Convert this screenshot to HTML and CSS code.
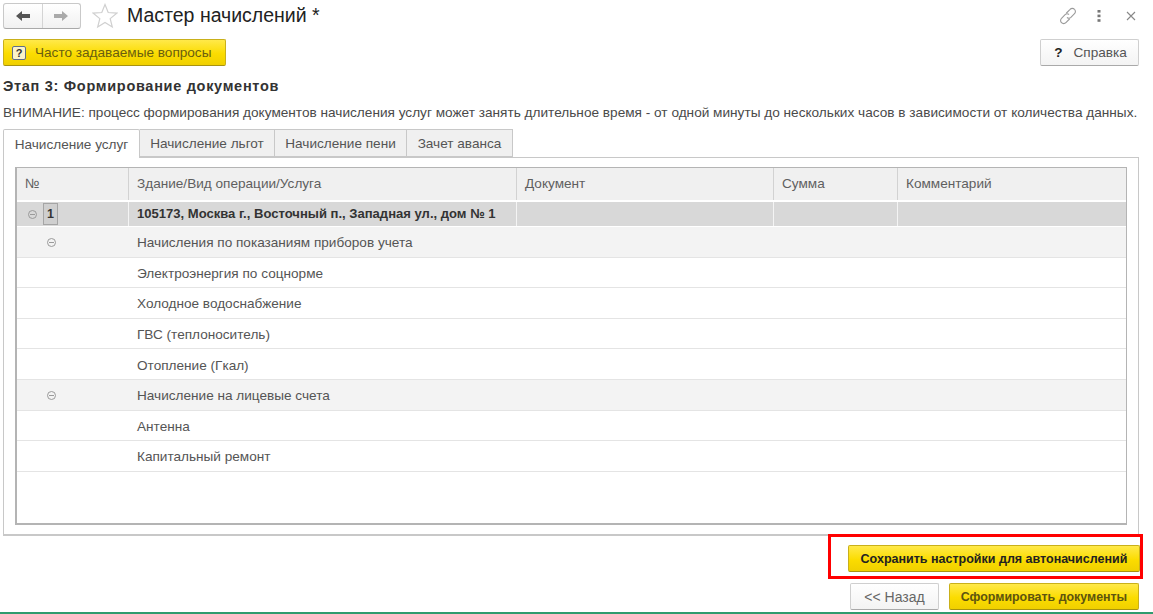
FILE: index.html
```html
<!DOCTYPE html>
<html lang="ru">
<head>
<meta charset="utf-8">
<title>Мастер начислений</title>
<link rel="stylesheet" href="styles.css">
</head>
<body>
<div class="page">
  <header class="topbar">
    <div class="nav">
      <span class="nav-btn">
        <svg width="16" height="12" viewBox="0 0 16 12"><path d="M1 6l6-5v3h8v4H7v3z" fill="#555"/></svg>
      </span>
      <span class="nav-btn">
        <svg width="16" height="12" viewBox="0 0 16 12"><path d="M15 6L9 1v3H1v4h8v3z" fill="#aaa"/></svg>
      </span>
    </div>
    <svg class="star" width="26" height="26" viewBox="0 0 26 26"><path d="M13 1.5l3.2 8 8.6.6-6.6 5.5 2.1 8.4L13 19.4l-7.3 4.6 2.1-8.4-6.6-5.5 8.6-.6z" fill="#fff" stroke="#d0d0d0" stroke-width="1.2"/></svg>
    <h1 class="title">Мастер начислений *</h1>
    <div class="win-icons">
      <svg width="20" height="20" viewBox="0 0 20 20"><g fill="none" stroke="#9a9a9a" stroke-width="1.1" stroke-linecap="round"><path d="M8.5 7l3.6-3.7a3 3 0 0 1 4.4 0 3 3 0 0 1 0 4.3l-3.6 3.7a3 3 0 0 1-3.6.4"/><path d="M11.5 13l-3.6 3.7a3 3 0 0 1-4.4 0 3 3 0 0 1 0-4.3l3.6-3.7a3 3 0 0 1 3.6-.4"/></g></svg>
      <svg width="4" height="12" viewBox="0 0 4 12"><g fill="#777"><rect x="0.5" y="0" width="3" height="2.6"/><rect x="0.5" y="4.6" width="3" height="2.6"/><rect x="0.5" y="9.2" width="3" height="2.6"/></g></svg>
      <svg width="10" height="10" viewBox="0 0 10 10"><path d="M1 1l8 8M9 1l-8 8" stroke="#888" stroke-width="1.1"/></svg>
    </div>
  </header>

  <div class="actions">
    <button class="btn btn-yellow btn-faq">
      <span class="q-icon">?</span>Часто задаваемые вопросы
    </button>
    <button class="btn btn-help"><span class="help-mark">?</span>Справка</button>
  </div>

  <h2 class="stage">Этап 3: Формирование документов</h2>
  <p class="notice">ВНИМАНИЕ: процесс формирования документов начисления услуг может занять длительное время - от одной минуты до нескольких часов в зависимости от количества данных.</p>

  <nav class="tabs">
    <span class="tab tab-active tab-1">Начисление услуг</span>
    <span class="tab tab-2">Начисление льгот</span>
    <span class="tab tab-3">Начисление пени</span>
    <span class="tab tab-4">Зачет аванса</span>
  </nav>

  <section class="panel">
    <div class="table">
      <div class="row row-head">
        <div class="cell">№</div>
        <div class="cell">Здание/Вид операции/Услуга</div>
        <div class="cell">Документ</div>
        <div class="cell">Сумма</div>
        <div class="cell">Комментарий</div>
      </div>
      <div class="row row-building">
        <div class="cell cell-num"><span class="minus"></span><span class="num-box">1</span></div>
        <div class="cell">105173, Москва г., Восточный п., Западная ул., дом № 1</div>
        <div class="cell"></div>
        <div class="cell"></div>
        <div class="cell"></div>
      </div>
      <div class="line line-group"><div class="line-num"><span class="minus minus-sub"></span></div><div>Начисления по показаниям приборов учета</div></div>
      <div class="line"><div class="line-num"></div><div>Электроэнергия по соцнорме</div></div>
      <div class="line"><div class="line-num"></div><div>Холодное водоснабжение</div></div>
      <div class="line"><div class="line-num"></div><div>ГВС (теплоноситель)</div></div>
      <div class="line"><div class="line-num"></div><div>Отопление (Гкал)</div></div>
      <div class="line line-group"><div class="line-num"><span class="minus minus-sub"></span></div><div>Начисление на лицевые счета</div></div>
      <div class="line"><div class="line-num"></div><div>Антенна</div></div>
      <div class="line"><div class="line-num"></div><div>Капитальный ремонт</div></div>
    </div>
  </section>

  <div class="save-wrap">
    <div class="highlight">
      <button class="btn btn-yellow btn-save">Сохранить настройки для автоначислений</button>
    </div>
  </div>

  <div class="footer">
    <button class="btn btn-back">&lt;&lt; Назад</button>
    <button class="btn btn-yellow btn-make">Сформировать документы</button>
  </div>
  <div class="strip"></div>
</div>
</body>
</html>
```
FILE: styles.css
```css
* { box-sizing: border-box; }
html, body { margin: 0; padding: 0; }
body {
  width: 1153px;
  height: 614px;
  overflow: hidden;
  background: #fff;
  font-family: "Liberation Sans", Arial, sans-serif;
  font-size: 13.6px;
  color: #555;
}
.page { display: flex; flex-direction: column; height: 614px; }

.topbar { display: flex; align-items: center; height: 29px; padding: 2px 17px 0 3px; flex: none; }
.nav {
  display: flex; width: 78px; height: 26px;
  border: 1px solid #c9c9c9; border-bottom-color: #a9a9a9; border-radius: 3px;
  background: linear-gradient(#fff, #f1f1f1);
}
.nav-btn { flex: 1; display: flex; align-items: center; justify-content: center; }
.nav-btn + .nav-btn { border-left: 1px solid #d4d4d4; }
.star { margin-left: 11px; }
.title { margin: 0 0 0 9px; font-size: 19.5px; font-weight: 400; color: #222; }
.win-icons { margin-left: auto; display: flex; align-items: center; gap: 19px; }
.win-icons svg:nth-child(2) { margin-right: 6px; }

.actions { display: flex; justify-content: space-between; padding: 10px 14px 0 3px; flex: none; }
.btn {
  font-family: inherit; font-size: 13.6px; color: #555; padding: 0; margin: 0;
  display: flex; align-items: center; justify-content: center;
  border-radius: 2px; white-space: nowrap;
}
.btn-yellow {
  background: linear-gradient(#ffe94a, #fbdc00 55%, #f0d000);
  border: 1px solid #c9b01a; border-bottom-color: #a8930f;
}
.btn-faq { width: 223px; height: 27px; justify-content: flex-start; padding-left: 8px; color: #6a5e10; }
.q-icon {
  width: 14px; height: 14px; border: 1px solid #5f6f8a; border-radius: 2px; background: #fbf3c8;
  color: #333; font-size: 11px; line-height: 12px; text-align: center; margin-right: 9px; font-weight: 700;
}
.btn-help {
  width: 99px; height: 27px; background: linear-gradient(#fff, #f3f3f3);
  border: 1px solid #cfcfcf; border-bottom-color: #a9a9a9; padding-left: 2px;
}
.help-mark { font-weight: 700; color: #222; font-size: 13.6px; margin-right: 11px; }

.stage { margin: 12px 0 0 3px; font-size: 14.5px; line-height: 16px; font-weight: 700; color: #333; letter-spacing: 0.7px; flex: none; }
.notice { margin: 11px 0 0 3px; font-size: 13.63px; line-height: 16px; white-space: nowrap; color: #4a4a4a; flex: none; }

.tabs { display: flex; padding-left: 3px; margin-top: 8px; height: 29px; flex: none; position: relative; z-index: 1; }
.tab {
  display: flex; align-items: center; justify-content: center; height: 28px;
  background: #f0f0f0; border: 1px solid #c8c8c8; border-left: 0; color: #555;
}
.tab-active { background: #fff; border-left: 1px solid #c8c8c8; border-bottom: 0; height: 29px; border-radius: 2px 2px 0 0; }
.tab-1 { width: 137px; }
.tab-2 { width: 135px; }
.tab-3 { width: 132px; }
.tab-4 { width: 106px; }

.panel {
  margin: -1px 14px -2px 3px; height: 379px; padding: 9px 11px 10px 11px;
  border: 1px solid #c8c8c8; border-bottom-width: 2px; flex: none;
}
.table { height: 358px; border: 1px solid #b4b4b4; border-width: 1px 1px 2px 2px; }
.row { display: grid; grid-template-columns: 112px 388px 257px 124px 1fr; }
.row-head { height: 34px; background: #f0f0f0; border-bottom: 2px solid #fff; color: #5f5f5f; }
.row-head .cell { padding-left: 8px; line-height: 31px; border-right: 1px solid #d2d2d2; }
.row-head .cell:last-child, .row-building .cell:last-child { border-right: 0; }
.row-building { height: 25px; background: #d8d8d8; border-bottom: 1px solid #fff; font-weight: 700; font-size: 13.05px; color: #333; }
.row-building .cell { padding-left: 8px; line-height: 23px; border-right: 1px solid #f4f4f4; }
.row-building .cell-num { display: flex; align-items: center; padding-left: 11px; }
.minus {
  display: block; width: 9px; height: 9px; border: 1px solid #9a9a9a; border-radius: 50%;
  background: linear-gradient(#9a9a9a, #9a9a9a) center / 5px 1px no-repeat;
}
.minus-sub { margin-left: 30px; }
.num-box {
  width: 15px; height: 22px; margin-left: 6px; background: #cfcfcf; border: 1px solid #a5a5a5;
  text-align: center; line-height: 20px; font-size: 12.5px;
}
.line {
  display: grid; grid-template-columns: 120px 1fr; align-items: center; height: 30.6px;
  border-bottom: 1px solid #e4e4e4; padding-top: 2px;
}
.line-group { background: #f3f3f3; }
.line-num { display: flex; align-items: center; }

.save-wrap { display: flex; justify-content: flex-end; padding-right: 10px; flex: none; }
.highlight { border: 3px solid #f00; width: 315px; height: 45px; padding: 8px 1px 0 17px; }
.btn-save { width: 292px; height: 27px; font-weight: 700; font-size: 12.5px; color: #222; }
.footer { display: flex; justify-content: flex-end; gap: 10px; padding: 4px 14px 0 0; flex: none; }
.btn-back {
  width: 89px; height: 27px; background: linear-gradient(#fff, #f3f3f3);
  border: 1px solid #cfcfcf; border-bottom-color: #a9a9a9; color: #666; font-size: 14px;
}
.btn-make { width: 190px; height: 27px; font-weight: 700; font-size: 12.4px; color: #5d5410; }
.strip { margin-top: auto; height: 2px; background: #2f9b6e; flex: none; }
```
